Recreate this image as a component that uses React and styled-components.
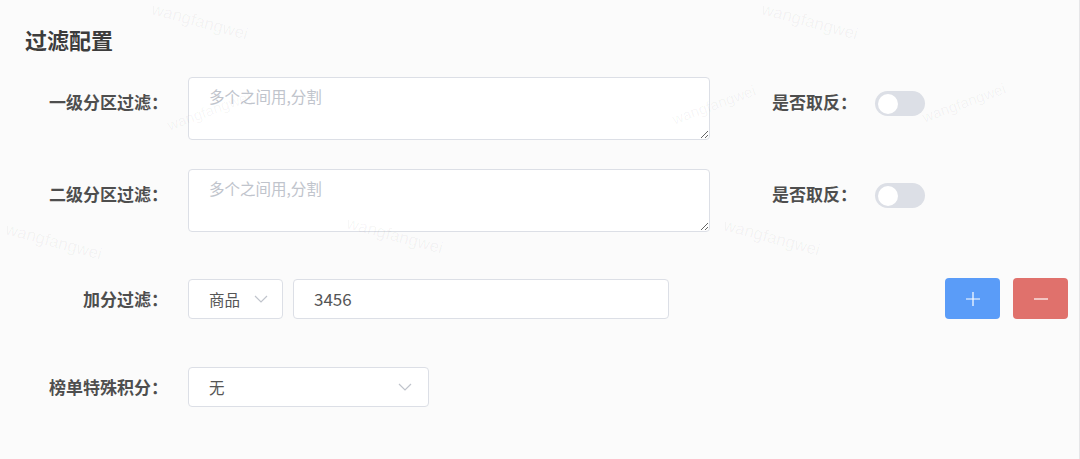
import React from "react";
import styled, { createGlobalStyle } from "styled-components";

const Global = createGlobalStyle`
  html, body { margin: 0; padding: 0; background: #fbfbfb; }
  body { font-family: "Noto Sans CJK SC", "Noto Sans", sans-serif; }
  * { box-sizing: border-box; }
`;

const Page = styled.div`
  position: relative;
  width: 1080px;
  height: 459px;
  overflow: hidden;
  padding: 23px 0 0 25px;
  border-right: 1px solid #e6e6e8;
`;

const Title = styled.h2`
  margin: 0 0 22px;
  font-size: 22px;
  line-height: 32px;
  font-weight: 700;
  color: #3c3c3c;
`;

const Row = styled.div`
  display: flex;
  align-items: ${(p) => (p.$top ? "flex-start" : "center")};
  margin-bottom: ${(p) => p.$mb || 0}px;
`;

const Label = styled.label`
  flex: 0 0 auto;
  width: ${(p) => (p.$w ? `${p.$w}px` : "auto")};
  text-align: right;
  font-size: 17px;
  font-weight: 700;
  color: #4e4e4e;
  line-height: 24px;
  margin-left: ${(p) => p.$ml || 0}px;
  margin-top: ${(p) => p.$mt || 0}px;
`;

const Control = styled.div`
  margin-left: ${(p) => p.$ml || 20}px;
  display: flex;
  align-items: center;
  gap: 10px;
`;

const TextArea = styled.textarea`
  width: 522px;
  height: 63px;
  padding: 7px 20px;
  border: 1px solid #dcdfe6;
  border-radius: 4px;
  background: #fff;
  font-family: inherit;
  font-size: 15.5px;
  line-height: 22px;
  color: #606266;
  resize: vertical;
  outline: none;
  &::placeholder { color: #c0c4cc; }
`;

const Switch = styled.span`
  position: relative;
  display: inline-block;
  flex: 0 0 auto;
  width: 50px;
  height: 25px;
  border-radius: 13px;
  background: #dcdfe6;
  margin-left: ${(p) => p.$ml || 18}px;
  margin-top: ${(p) => p.$mt || 0}px;
  &::after {
    content: "";
    position: absolute;
    top: 2.5px;
    left: 3px;
    width: 20px;
    height: 20px;
    border-radius: 50%;
    background: #fff;
  }
`;

const SelectBox = styled.div`
  width: ${(p) => p.$w}px;
  height: 40px;
  border: 1px solid #dcdfe6;
  border-radius: 4px;
  background: #fff;
  display: flex;
  align-items: center;
  justify-content: space-between;
  padding: 0 ${(p) => p.$pr || 14}px 0 20px;
  font-size: 15.5px;
  color: #555;
`;

const Chevron = () => (
  <svg width="14" height="8" viewBox="0 0 14 8" fill="none">
    <path d="M1 1l6 6 6-6" stroke="#c0c4cc" strokeWidth="1.2" />
  </svg>
);

const Input = styled.div`
  width: 376px;
  height: 40px;
  border: 1px solid #dcdfe6;
  border-radius: 4px;
  background: #fff;
  display: flex;
  align-items: center;
  padding: 0 20px;
  font-size: 17px;
  color: #555;
`;

const Actions = styled.div`
  margin-left: auto;
  margin-right: 11px;
  display: flex;
  gap: 13px;
`;

const IconButton = styled.button`
  width: 55px;
  height: 41px;
  border: none;
  border-radius: 4px;
  background: ${(p) => p.$bg};
  display: flex;
  align-items: center;
  justify-content: center;
  padding: 0;
`;

const Mark = styled.span`
  position: absolute;
  left: ${(p) => p.$x}px;
  top: ${(p) => p.$y}px;
  transform: rotate(${(p) => p.$r}deg);
  font-family: "Liberation Sans", sans-serif;
  font-size: ${(p) => p.$s || 17}px;
  color: rgba(0, 0, 0, ${(p) => p.$a || 0.045});
  white-space: nowrap;
  pointer-events: none;
`;

const marks = [
  { x: 165, y: 102, r: -20, t: "wangfangwei", s: 15 },
  { x: 670, y: 96, r: -20, t: "wangfangwei", s: 15 },
  { x: 920, y: 94, r: -20, t: "wangfangwei", s: 15 },
  { x: 150, y: 12, r: 15, t: "wangfangwei" },
  { x: 760, y: 12, r: 15, t: "wangfangwei" },
  { x: 4, y: 232, r: 15, t: "wangfangwei" },
  { x: 345, y: 226, r: 15, t: "wangfangwei" },
  { x: 722, y: 228, r: 15, t: "wangfangwei" },
  { x: 205, y: 62, r: -20, t: "0750D 2024-03-07 02:46:21", s: 14, a: 0.025 },
  { x: 722, y: 40, r: -20, t: "0750D 2024-03-07 02:46:21", s: 14, a: 0.025 },
];

export default function App() {
  return (
    <>
      <Global />
      <Page>
        <Title>过滤配置</Title>
        <Row $top $mb={29}>
          <Label $w={143} $mt={13}>一级分区过滤：</Label>
          <Control>
            <TextArea placeholder="多个之间用,分割" />
          </Control>
          <Label $ml={62} $mt={13}>是否取反：</Label>
          <Switch $mt={14} />
        </Row>
        <Row $top $mb={46}>
          <Label $w={143} $mt={13}>二级分区过滤：</Label>
          <Control>
            <TextArea placeholder="多个之间用,分割" />
          </Control>
          <Label $ml={62} $mt={13}>是否取反：</Label>
          <Switch $mt={14} />
        </Row>
        <Row $mb={48}>
          <Label $w={143}>加分过滤：</Label>
          <Control>
            <SelectBox $w={95}>
              商品
              <Chevron />
            </SelectBox>
            <Input>3456</Input>
          </Control>
          <Actions>
            <IconButton $bg="#5a9cf8" aria-label="add">
              <svg width="14" height="14" viewBox="0 0 14 14">
                <path d="M7 0v14M0 7h14" stroke="#fff" strokeWidth="1.2" />
              </svg>
            </IconButton>
            <IconButton $bg="#e0716c" aria-label="remove">
              <svg width="14" height="14" viewBox="0 0 14 14">
                <path d="M0 7h14" stroke="#fff" strokeWidth="1.2" />
              </svg>
            </IconButton>
          </Actions>
        </Row>
        <Row>
          <Label $w={143}>榜单特殊积分：</Label>
          <Control>
            <SelectBox $w={241} $pr={16}>
              无
              <Chevron />
            </SelectBox>
          </Control>
        </Row>
        {marks.map((m, i) => (
          <Mark key={i} $x={m.x} $y={m.y} $r={m.r} $s={m.s} $a={m.a}>
            {m.t}
          </Mark>
        ))}
      </Page>
    </>
  );
}
